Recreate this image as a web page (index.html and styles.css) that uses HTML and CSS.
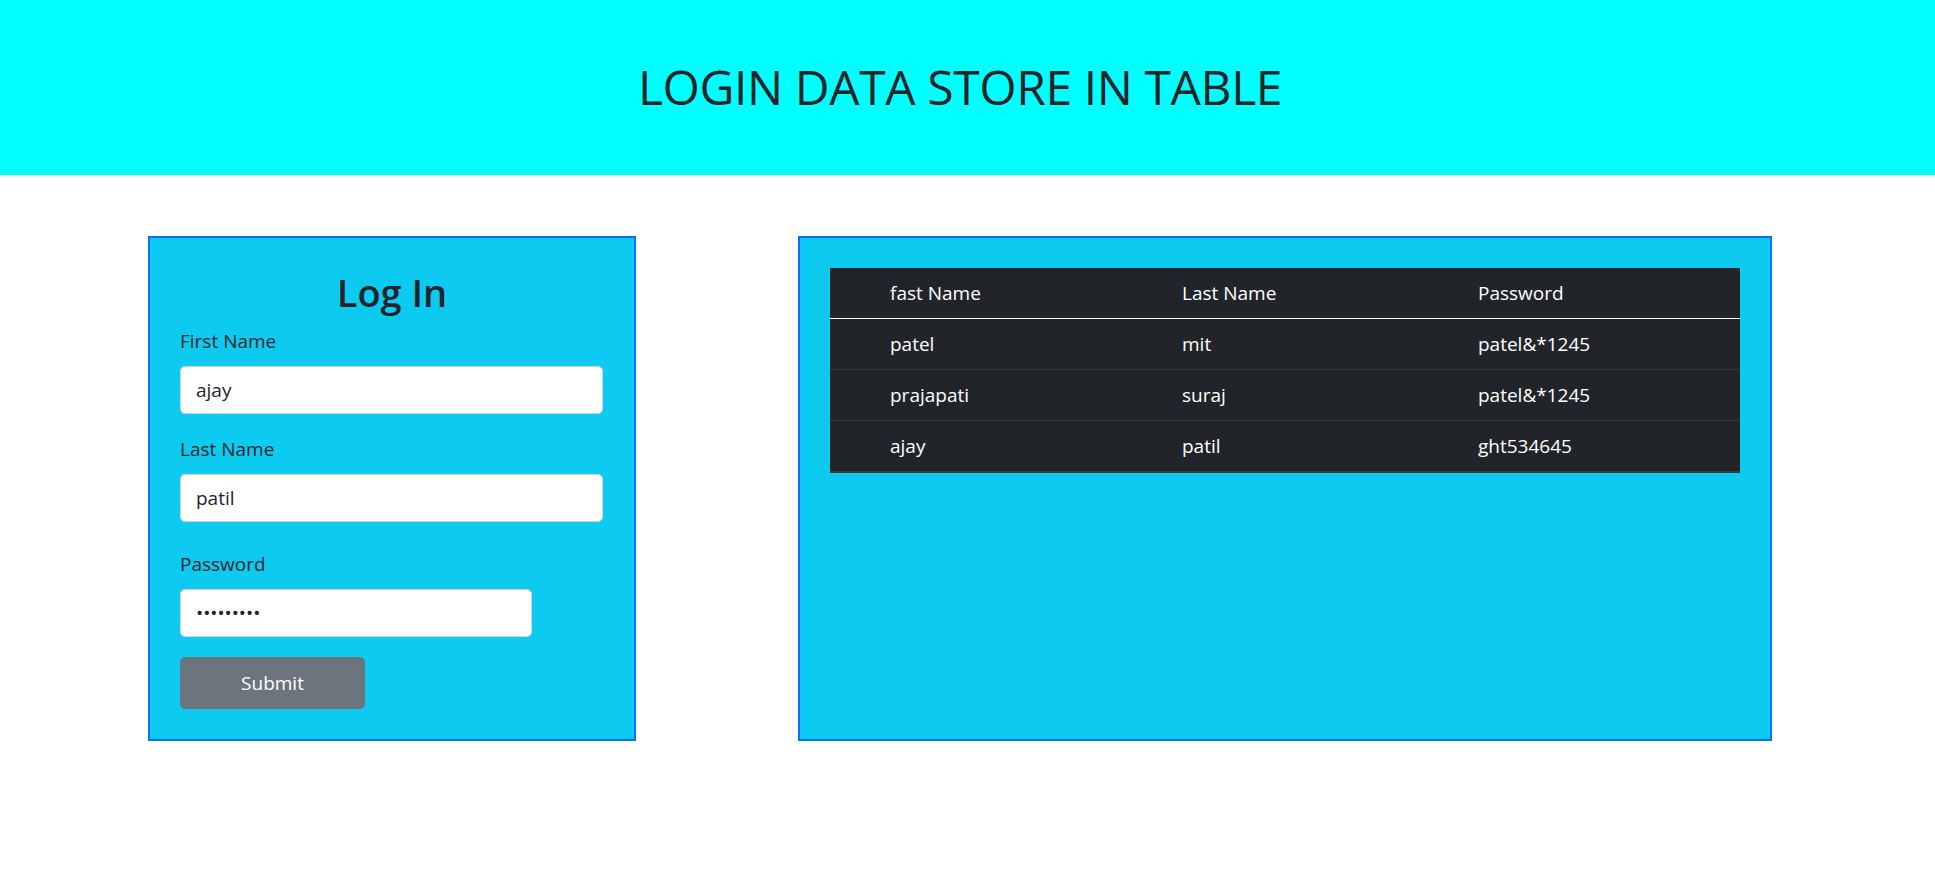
FILE: index.html
```html
<!DOCTYPE html>
<html lang="en">
<head>
<meta charset="utf-8">
<title>Login Data Store In Table</title>
<link rel="stylesheet" href="styles.css">
</head>
<body>
<header class="banner">
  <h1 class="banner-title">LOGIN DATA STORE IN TABLE</h1>
</header>
<main class="content">
  <section class="card login-card">
    <h2 class="login-title">Log In</h2>
    <form class="login-form">
      <div class="field">
        <label class="field-label" for="fname">First Name</label>
        <input class="field-input" id="fname" type="text" value="ajay">
      </div>
      <div class="field">
        <label class="field-label" for="lname">Last Name</label>
        <input class="field-input" id="lname" type="text" value="patil">
      </div>
      <div class="field field-password">
        <label class="field-label" for="pwd">Password</label>
        <input class="field-input field-input-short" id="pwd" type="password" value="ght534645">
      </div>
      <button class="submit-btn" type="button">Submit</button>
    </form>
  </section>
  <section class="card data-card">
    <table class="data-table">
      <colgroup>
        <col class="col-index">
        <col class="col-first">
        <col class="col-last">
        <col class="col-pass">
      </colgroup>
      <thead>
        <tr class="head-row">
          <th class="cell"></th>
          <th class="cell">fast Name</th>
          <th class="cell">Last Name</th>
          <th class="cell">Password</th>
        </tr>
      </thead>
      <tbody>
        <tr class="body-row">
          <td class="cell"></td>
          <td class="cell">patel</td>
          <td class="cell">mit</td>
          <td class="cell">patel&amp;*1245</td>
        </tr>
        <tr class="body-row">
          <td class="cell"></td>
          <td class="cell">prajapati</td>
          <td class="cell">suraj</td>
          <td class="cell">patel&amp;*1245</td>
        </tr>
        <tr class="body-row">
          <td class="cell"></td>
          <td class="cell">ajay</td>
          <td class="cell">patil</td>
          <td class="cell">ght534645</td>
        </tr>
      </tbody>
    </table>
  </section>
</main>
</body>
</html>
```
FILE: styles.css
```css
* {
  box-sizing: border-box;
}

body {
  margin: 0;
  font-family: "Open Sans", "Noto Sans", sans-serif;
  font-size: 19px;
  line-height: 30px;
  color: #212529;
  background: #ffffff;
}

.banner {
  height: 175px;
  padding: 57px 15px 0 0;
  background: #00ffff;
  text-align: center;
}

.banner-title {
  margin: 0;
  font-size: 48px;
  line-height: 60px;
  font-weight: 400;
  letter-spacing: -0.4px;
  color: #212529;
}

.content {
  display: flex;
  align-items: stretch;
  gap: 162px;
  padding: 61px 0 0 148px;
}

.card {
  background: #0dcaf0;
  border: 2px solid #0d6efd;
  padding: 30px;
}

.login-card {
  width: 488px;
}

.data-card {
  width: 974px;
}

.login-title {
  margin: 0 0 10px;
  font-size: 38px;
  line-height: 48px;
  font-weight: 600;
  text-align: center;
}

.login-form {
  display: flex;
  flex-direction: column;
}

.field {
  display: flex;
  flex-direction: column;
  margin-bottom: 20px;
}

.field-password {
  margin-top: 7px;
}

.field-label {
  margin-bottom: 10px;
  font-size: 19px;
  line-height: 30px;
}

.field-input {
  width: 423px;
  height: 48px;
  padding: 0 15px;
  border: 1px solid #ced4da;
  border-radius: 5px;
  background: #ffffff;
  font-family: inherit;
  font-size: 19px;
  color: #212529;
  outline: none;
}

.field-input-short {
  width: 352px;
}

.submit-btn {
  width: 185px;
  height: 52px;
  border: 1px solid #6c757d;
  border-radius: 5px;
  background: #6c757d;
  color: #ffffff;
  font-family: inherit;
  font-size: 19px;
  line-height: 30px;
  cursor: pointer;
}

.data-table {
  width: 100%;
  table-layout: fixed;
  border-collapse: collapse;
  background: #212529;
  color: #ffffff;
}

.col-index {
  width: 50px;
}

.col-first {
  width: 292px;
}

.col-last {
  width: 296px;
}

.col-pass {
  width: 272px;
}

.cell {
  padding: 10px;
  height: 50px;
  font-weight: 400;
  text-align: left;
  line-height: 30px;
}

.head-row {
  border-bottom: 1px solid #ffffff;
}

.body-row {
  border-bottom: 1px solid #373b3e;
}

.body-row:last-child {
  border-bottom: 2px solid #373b3e;
}
```
